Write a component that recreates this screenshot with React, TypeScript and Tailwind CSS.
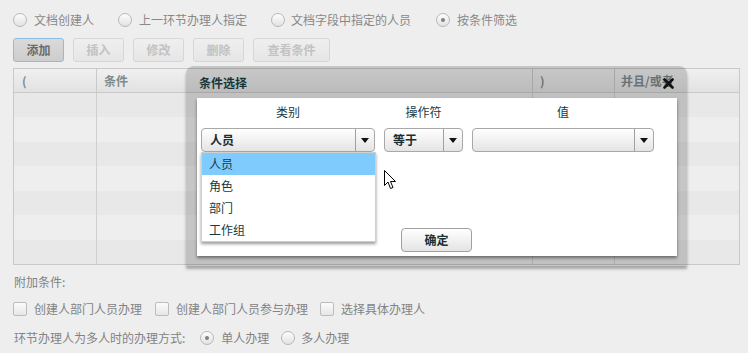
import React from "react";

const FONT = { fontFamily: '"Noto Sans CJK SC", "Liberation Sans", sans-serif' };

function Radio({ checked }: { checked?: boolean }) {
  return (
    <span className="w-[14px] h-[14px] rounded-full border border-[#b8b8b8] bg-gradient-to-b from-[#fdfdfd] to-[#e2e2e2] flex items-center justify-center shrink-0">
      {checked && <span className="w-[4px] h-[4px] rounded-full bg-[#808080]" />}
    </span>
  );
}

function Check() {
  return (
    <span className="block w-[14px] h-[14px] rounded-[2px] border border-[#bcbcbc] bg-gradient-to-b from-[#fbfbfb] to-[#e6e6e6] shrink-0" />
  );
}

function Btn({ label, active, w }: { label: string; active?: boolean; w: string }) {
  return (
    <div
      className={
        active
          ? "h-[24px] rounded-[3px] border border-[#8cbde0] bg-gradient-to-b from-[#dadada] to-[#cdcdcd] flex items-center justify-center font-bold text-[#6a6a6a] " + w
          : "h-[24px] rounded-[3px] border border-[#d6d6d6] bg-gradient-to-b from-[#efefef] to-[#e6e6e6] flex items-center justify-center font-bold text-[#c2c2c2] " + w
      }
    >
      {label}
    </div>
  );
}

function Select({ w, text }: { w: string; text?: string }) {
  return (
    <div className={"h-[24px] rounded-[4px] border border-[#a8a8a8] bg-gradient-to-b from-[#ffffff] to-[#e4e4e4] flex items-center " + w}>
      <div className="flex-1 pl-[8px] font-bold text-[#1a2e30] text-[12px]">{text}</div>
      <div className="w-[19px] h-full border-l border-[#a0a0a0] flex items-center justify-center">
        <svg width="8" height="5" viewBox="0 0 8 5">
          <path d="M0 0 L8 0 L4 5 Z" fill="#111" />
        </svg>
      </div>
    </div>
  );
}

export default function App() {
  const rows = [0, 1, 2, 3, 4, 5, 6];
  return (
    <div className="relative w-[748px] h-[353px] overflow-hidden bg-[#eeeeee] text-[12px] leading-none" style={FONT}>
      <div className="flex flex-col px-[13px]">
        {/* radio row */}
        <div className="mt-[12px] h-[16px] flex items-center text-[#888888]">
          <Radio />
          <span className="ml-[7px]">文档创建人</span>
          <span className="ml-[24px]"><Radio /></span>
          <span className="ml-[7px]">上一环节办理人指定</span>
          <span className="ml-[24px]"><Radio /></span>
          <span className="ml-[6px]">文档字段中指定的人员</span>
          <span className="ml-[25px]"><Radio checked /></span>
          <span className="ml-[7px]">按条件筛选</span>
        </div>
        {/* buttons */}
        <div className="mt-[10px] flex gap-[9px]">
          <Btn label="添加" active w="w-[51px]" />
          <Btn label="插入" w="w-[51px]" />
          <Btn label="修改" w="w-[51px]" />
          <Btn label="删除" w="w-[51px]" />
          <Btn label="查看条件" w="w-[77px]" />
        </div>
        {/* table */}
        <div className="mt-[6px] w-[727px] h-[197px] border border-[#c9c9c9] flex flex-col">
          <div className="h-[24px] flex border-b border-[#c9c9c9] bg-gradient-to-b from-[#f0f0f0] to-[#e2e2e2] font-bold text-[#7d8b8d]">
            <div className="w-[83px] border-r border-[#c9c9c9] pl-[8px] flex items-center">(</div>
            <div className="w-[436px] border-r border-[#c9c9c9] pl-[7px] flex items-center">条件</div>
            <div className="w-[82px] border-r border-[#c9c9c9] pl-[7px] flex items-center">)</div>
            <div className="flex-1 pl-[6px] flex items-center">并且/或者</div>
          </div>
          <div className="flex-1 flex flex-col">
            {rows.map((r) => (
              <div key={r} className={"flex-1 flex " + (r % 2 === 0 ? "bg-[#e8e8e8]" : "bg-[#eeeeee]")}>
                <div className="w-[83px] border-r border-[#cfcfcf]" />
                <div className="w-[436px] border-r border-[#cfcfcf]" />
                <div className="w-[82px] border-r border-[#cfcfcf]" />
                <div className="flex-1" />
              </div>
            ))}
          </div>
        </div>
        {/* additional */}
        <div className="mt-[9px] h-[16px] flex items-center text-[#838383] pl-[1px]">附加条件:</div>
        <div className="mt-[11px] h-[16px] flex items-center text-[#838383]">
          <Check />
          <span className="ml-[7px]">创建人部门人员办理</span>
          <span className="ml-[13px]"><Check /></span>
          <span className="ml-[7px]">创建人部门人员参与办理</span>
          <span className="ml-[12px]"><Check /></span>
          <span className="ml-[7px]">选择具体办理人</span>
        </div>
        <div className="mt-[13px] h-[16px] flex items-center text-[#838383]">
          <span className="pl-[1px]">环节办理人为多人时的办理方式:</span>
          <span className="ml-[15px]"><Radio checked /></span>
          <span className="ml-[7px]">单人办理</span>
          <span className="ml-[12px]"><Radio /></span>
          <span className="ml-[6px]">多人办理</span>
        </div>
      </div>

      {/* modal */}
      <div className="absolute left-[186px] top-[66px] w-[501px] h-[200px] rounded-t-[8px] bg-[rgba(0,0,0,0.17)] shadow-[0_3px_3px_rgba(0,0,0,0.3)] flex flex-col">
        <div className="h-[32px] flex items-center justify-between pl-[13px] pr-[13px]">
          <span className="font-bold text-[#17363a] text-[12px] mt-[1px]">条件选择</span>
          <svg width="11" height="11" viewBox="0 0 11 11" className="mt-[2px]">
            <path d="M1.5 1.5 L9.5 9.5 M9.5 1.5 L1.5 9.5" stroke="#111" strokeWidth="2.6" strokeLinecap="round" />
          </svg>
        </div>
        <div className="ml-[11px] w-[480px] h-[158px] bg-white shadow-[0_2px_3px_rgba(0,0,0,0.45)] relative">
          <div className="flex pl-[4px] gap-[9px] pt-[6px] text-[#1b3a3f]">
            <div className="w-[174px] flex flex-col items-center">
              <div className="h-[16px] flex items-center">类别</div>
              <div className="mt-[8px]"><Select w="w-[174px]" text="人员" /></div>
            </div>
            <div className="w-[79px] flex flex-col items-center">
              <div className="h-[16px] flex items-center">操作符</div>
              <div className="mt-[8px]"><Select w="w-[79px]" text="等于" /></div>
            </div>
            <div className="w-[182px] flex flex-col items-center">
              <div className="h-[16px] flex items-center">值</div>
              <div className="mt-[8px]"><Select w="w-[182px]" /></div>
            </div>
          </div>
          <div className="flex pl-[204px] pt-[76px]">
            <div className="w-[71px] h-[24px] rounded-[4px] border border-[#a0a0a0] bg-gradient-to-b from-[#ffffff] to-[#e4e4e4] flex items-center justify-center font-bold text-[#1a2e30]">
              确定
            </div>
          </div>

          {/* dropdown list */}
          <div className="absolute left-[4px] top-[54px] w-[175px] bg-white border border-[#d0d0d0] shadow-[0_2px_3px_rgba(0,0,0,0.4)] flex flex-col text-[#163a40]">
            <div className="h-[22px] bg-[#80cbfd] flex items-center pl-[7px]">人员</div>
            <div className="h-[22px] flex items-center pl-[7px]">角色</div>
            <div className="h-[22px] flex items-center pl-[7px]">部门</div>
            <div className="h-[22px] flex items-center pl-[7px]">工作组</div>
          </div>

          {/* cursor */}
          <svg className="absolute left-[187px] top-[72px]" width="14" height="20" viewBox="0 0 14 20">
            <path d="M0.5 0.5 L0.5 15.5 L4 12 L6.5 18.5 L9 17.5 L6.5 11.5 L11.5 11.5 Z" fill="#fff" stroke="#000" strokeWidth="1" strokeLinejoin="miter" />
          </svg>
        </div>
      </div>
    </div>
  );
}
